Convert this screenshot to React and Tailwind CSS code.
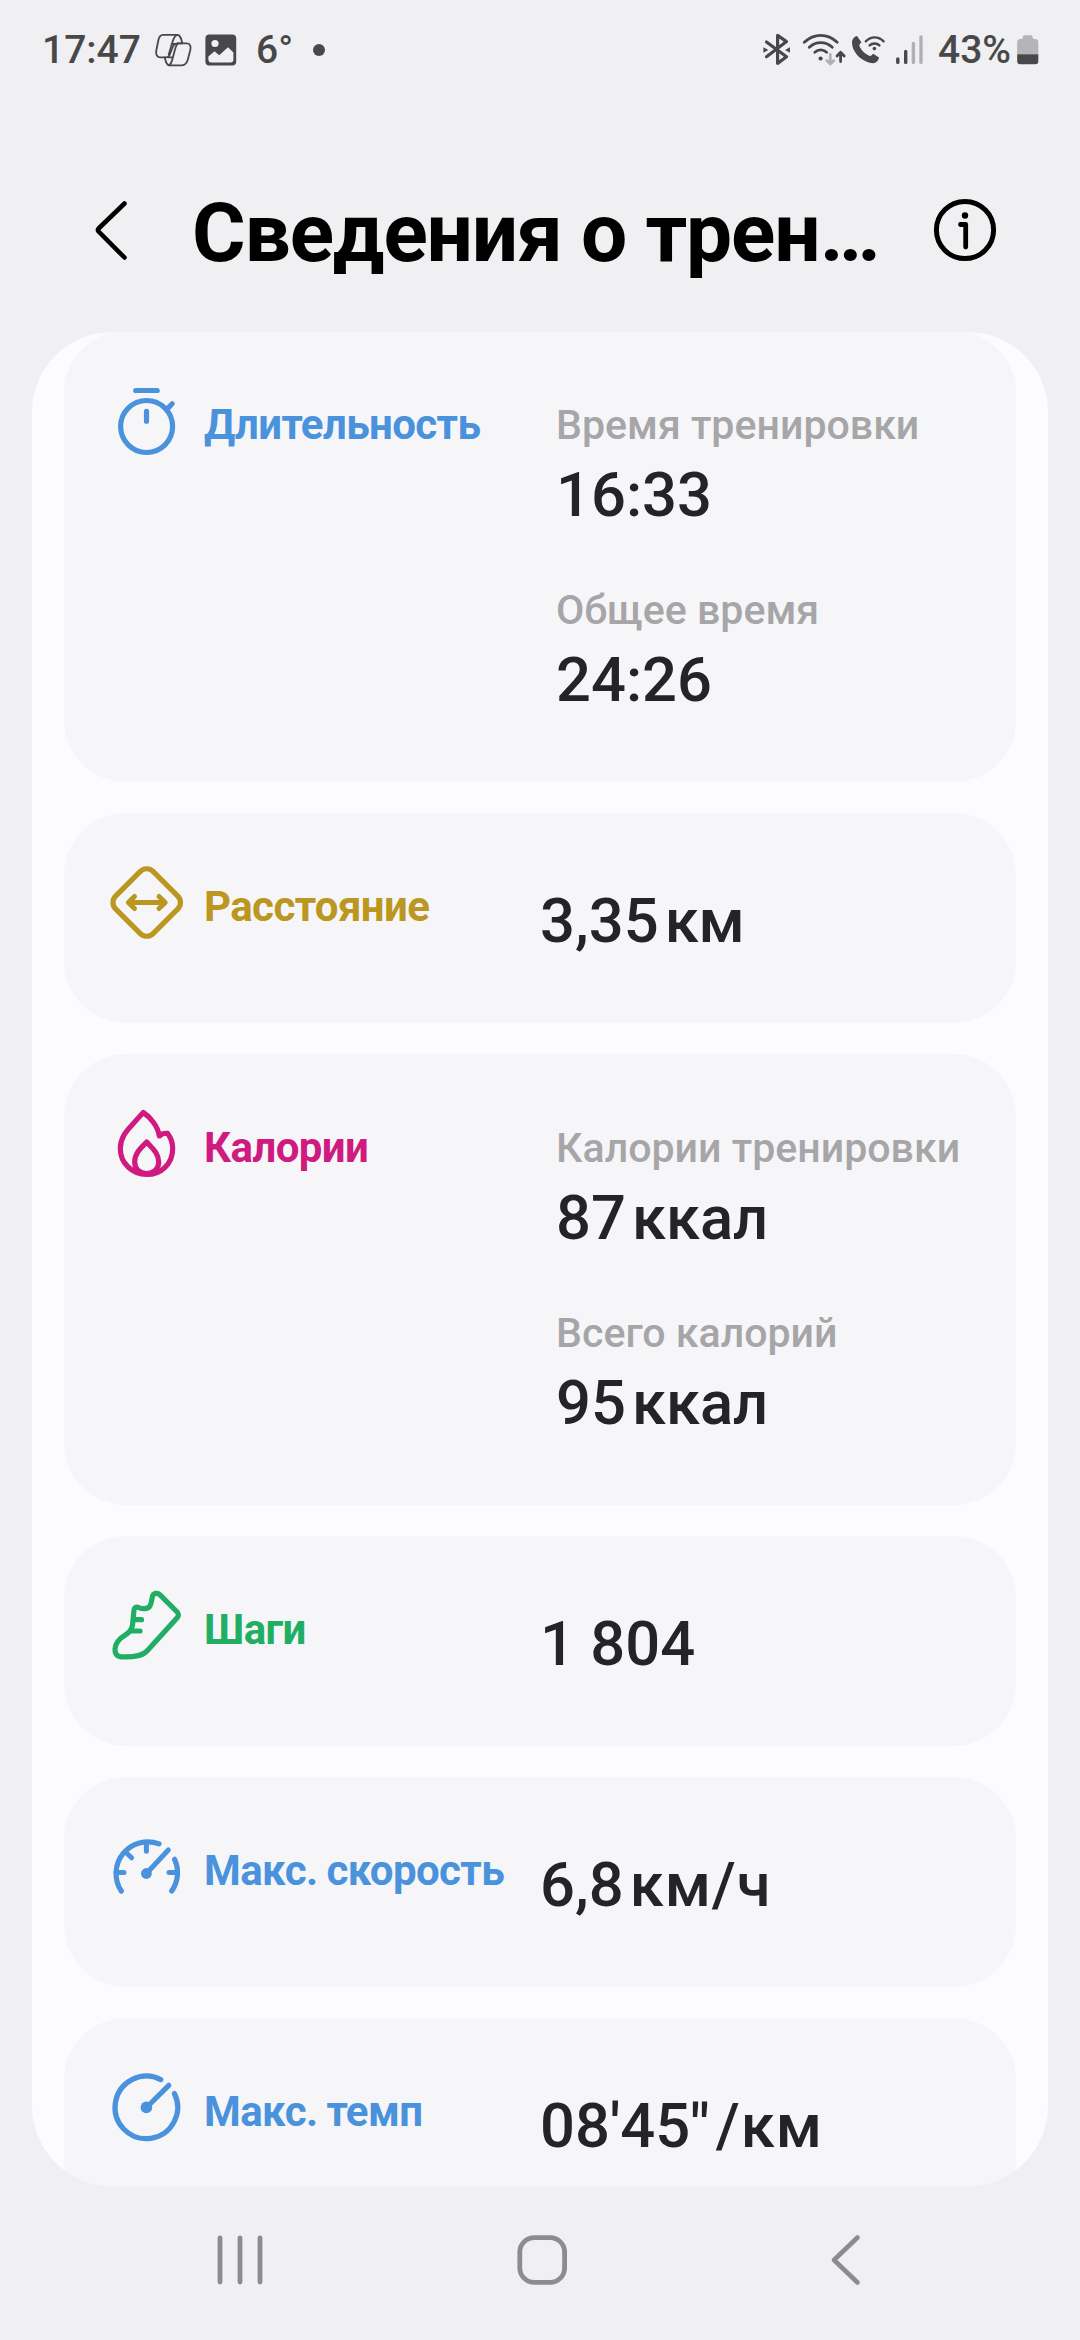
const stroke = {
  fill: 'none',
  stroke: 'currentColor',
  strokeLinecap: 'round',
  strokeLinejoin: 'round',
};

function CopilotIcon() {
  return (
    <svg className="h-9 w-10" viewBox="153 32 40 36" {...stroke} strokeWidth="1.8">
      <path d="M163 34.8H177.5C180.5 35 181.3 39 182.3 43.3H177.8C174 43.3 173 45.5 172 49L170 54C169.3 56.4 168.5 57.3 166.5 57.3H160C156.5 57.3 155.7 54 156.3 50.5L158.3 40.5C159 37 160.3 34.8 163 34.8Z" />
      <path d="M177.8 43.3H187C190.3 43.3 191 46.5 190.4 49.5L188 59C187 63 185.5 65.3 182 65.3H169.5C166.5 65.3 165.8 62 164.7 57.3" />
      <path d="M177.5 34.8C174.5 35.5 173.8 38 172.8 41L168.7 54.5" />
      <path d="M178 43.5C176 45 175.4 48 174.6 51L172 60.5C171.2 63.5 170.3 64.8 168.5 65.3" />
      <path d="M171.6 44H177M168.5 57.3H172.5" />
    </svg>
  );
}

function PictureIcon() {
  return (
    <svg className="h-8 w-8" viewBox="0 0 32 32">
      <rect x="0.4" y="0.4" width="30.8" height="31.2" rx="4" fill="currentColor" />
      <circle cx="10" cy="9.5" r="3.6" fill="#f0f0f2" />
      <path d="M3.4 22.5L9.5 17.2L14.2 21.3L23 13.3L28.4 18.5V25.5A3 3 0 0 1 25.4 28.5H6.4A3 3 0 0 1 3.4 25.5Z" fill="#f0f0f2" />
    </svg>
  );
}

function SystemIcons() {
  return (
    <svg className="h-10 w-[168px]" viewBox="760 30 168 40" {...stroke}>
      <g strokeWidth="3.2">
        <path d="M766.5 42L786.5 56.8L777.6 63.4V35.4L786.5 41.6L766.5 56.8" />
      </g>
      <g fill="currentColor" stroke="none">
        <path d="M763.4 47.2L768.4 50L763.4 52.8Z" />
        <path d="M790 47.2L785 50L790 52.8Z" />
        <circle cx="820.6" cy="58.5" r="2.1" />
        <circle cx="874.4" cy="48.6" r="1.8" />
        <path d="M857 36L861.5 42.6C860 43.6 859 45 859.6 46.6C861.5 51 865.5 54.4 869.6 55.9C871 56.2 872 54.7 873.2 53.8L879 57.6C878.6 60.3 876.6 62.8 873.6 63.2C863 63 852 53 852 42.3C852 39.3 854.3 36.7 857 36Z" />
      </g>
      <path d="M804.3 42.2C814 33 827.5 33 837.2 42.2M809.3 47.2C816 41 825.5 41 832.3 47.2M814.8 52.2C818.2 49.2 823.2 49.2 826.6 52.2" strokeWidth="2.8" />
      <path d="M830.3 54.5V63.5M826.8 60.5L830.3 64L833.8 60.5" stroke="#b1b1b3" strokeWidth="2.8" />
      <path d="M840.6 61.5V52.8M837 56L840.6 52.3L844.2 56" strokeWidth="2.8" />
      <path d="M865.8 41.3C871 36 878.5 36 883.6 41.3M869.6 45.4C872.3 42.9 877 42.9 879.4 45.4" strokeWidth="2.4" />
      <path d="M897.8 59V62.4M905.7 51.5V62.4" strokeWidth="3.4" />
      <path d="M913.4 43.5V62.4M921 37V62.4" stroke="#b1b1b3" strokeWidth="3.4" />
    </svg>
  );
}

function BatteryIcon() {
  return (
    <svg className="h-[30px] w-[22px]" viewBox="0 0 22 30">
      <path d="M6.5 0.3H15L16.2 4H18A3.2 3.2 0 0 1 21.3 7V19.3H0.2V7A3.2 3.2 0 0 1 3.5 4H5.2Z" fill="#b5b5b7" />
      <path d="M0.2 19.3H21.3V26A3.2 3.2 0 0 1 18 29.3H3.5A3.2 3.2 0 0 1 0.2 26Z" fill="currentColor" />
    </svg>
  );
}

function MetricIcon({ children }) {
  return (
    <svg className="mt-12 size-[84px] shrink-0" viewBox="0 0 84 84" {...stroke} strokeWidth="5.2">
      {children}
    </svg>
  );
}

const stopwatch = (
  <MetricIcon>
    <circle cx="41.6" cy="47.5" r="26" />
    <path d="M30.7 11.5H52.2M41.5 32.4V42.2M62.5 29.6L67.2 24.8" />
  </MetricIcon>
);

const distance = (
  <MetricIcon>
    <rect x="15.2" y="15" width="53" height="53" rx="9" transform="rotate(45 41.7 41.5)" />
    <path d="M23.5 41.5H60M29.5 35.5L23.3 41.5L29.5 47.5M54 35.5L60.2 41.5L54 47.5" strokeWidth="5" />
  </MetricIcon>
);

const flame = (
  <MetricIcon>
    <path d="M38.3 10.5C45 15 53 24 54.3 34C56.5 32 59 31 62.5 31.3C66 36 67.7 41 67.7 46.5C67.7 62 56 72.5 41.7 72.5C27 72.5 15.3 61 15.3 46.5C15.3 36 21 29.5 27 23C31 18.5 35 14 38.3 10.5Z" />
    <path d="M41.7 40C36 46 29.7 51 29.7 60C29.7 67 35 71.5 41.7 71.5C48.4 71.5 53.7 67 53.7 60C53.7 51 47 46 41.7 40Z" />
  </MetricIcon>
);

const shoe = (
  <MetricIcon>
    <path d="M47.5 12.5C48.3 9 52.5 8.3 55 10.8L72.2 28C73.8 29.6 73.8 32 72.2 33.8L42 67C37 72.3 29 73.3 16 72.8C11.5 72.6 9.8 69 10 65C10.3 58 16 53.5 21 50.5C25 48 26.5 46 27.5 41L29 26C29.3 23.5 31 22.7 33 23.3C36 24.5 40 25.8 43.5 23.5C46.5 21.5 46.2 17 47.5 12.5Z" />
    <path d="M28.5 35.7H36.5M27 47H35" />
  </MetricIcon>
);

const speedometer = (
  <MetricIcon>
    <path d="M16.3 66A31.7 31.7 0 0 1 54 18.9M69.6 34.3A31.7 31.7 0 0 1 66.7 66" />
    <path d="M41.4 17.5V26.3M20.8 27.3L26.6 32.8M11 47.5H19M64 47.5H72M41.4 48.5L63.3 25" strokeWidth="5" />
    <circle cx="41.4" cy="48.5" r="5.4" fill="currentColor" stroke="none" />
  </MetricIcon>
);

const pace = (
  <MetricIcon>
    <path d="M55.8 13.6A31.3 31.3 0 1 0 69.4 27.5M42 41L63.8 19.3" />
    <circle cx="41.4" cy="41.4" r="5.8" fill="currentColor" stroke="none" />
  </MetricIcon>
);

const metrics = [
  {
    label: 'Длительность',
    icon: stopwatch,
    color: 'text-[#4a92db]',
    rows: [
      { name: 'Время тренировки', value: '16:33' },
      { name: 'Общее время', value: '24:26' },
    ],
  },
  { label: 'Расстояние', icon: distance, color: 'text-[#bb9721]', value: '3,35', unit: 'км' },
  {
    label: 'Калории',
    icon: flame,
    color: 'text-[#cf1a7f]',
    rows: [
      { name: 'Калории тренировки', value: '87', unit: 'ккал' },
      { name: 'Всего калорий', value: '95', unit: 'ккал' },
    ],
  },
  { label: 'Шаги', icon: shoe, color: 'text-[#20ae65]', value: '1 804' },
  { label: 'Макс. скорость', icon: speedometer, color: 'text-[#4a92db]', value: '6,8', unit: 'км/ч' },
  { label: 'Макс. темп', icon: pace, color: 'text-[#4a92db]', value: '08\'45"', unit: '/км' },
];

function Value({ value, unit }) {
  return (
    <div className="flex gap-[6px] text-[61.5px] leading-[72px] font-medium whitespace-nowrap text-[#242426]">
      <span>{value}</span>
      {unit && (
        <span className={unit.includes('/') ? 'tracking-[1px] [font-kerning:none]' : ''}>{unit}</span>
      )}
    </div>
  );
}

function MetricCard({ label, icon, color, rows, value, unit }) {
  return (
    <section className={`flex shrink-0 rounded-[62px] bg-[#f6f6f8] pl-[41px] ${rows ? 'h-[451px]' : 'h-[210px]'}`}>
      <div className={`flex shrink-0 ${color} ${rows ? 'w-[451px]' : 'w-[435px]'}`}>
        {icon}
        <h2 className="mt-[70px] ml-[15px] text-[42px] leading-[48px] font-bold tracking-[-0.6px] whitespace-nowrap [word-spacing:-1px]">{label}</h2>
      </div>
      {rows ? (
        <div className="flex flex-col gap-[55px] pt-[70px]">
          {rows.map((row) => (
            <div key={row.name} className="flex flex-col gap-[10px]">
              <div className="text-[41.1px] leading-[48px] font-medium whitespace-nowrap text-[#a6a6a8]">{row.name}</div>
              <Value value={row.value} unit={row.unit} />
            </div>
          ))}
        </div>
      ) : (
        <div className="pt-[72px]">
          <Value value={value} unit={unit} />
        </div>
      )}
    </section>
  );
}

export default function App() {
  return (
    <div className="flex h-[2340px] w-[1080px] flex-col overflow-hidden bg-[#f0f0f2] font-['Roboto',sans-serif]">
      <div className="flex h-[100px] shrink-0 items-center justify-between pr-[41px] pl-[42px] text-[39px] leading-[46px] font-medium text-[#48484a]">
        <div className="flex items-center">
          <span className="w-[111px]">17:47</span>
          <CopilotIcon />
          <span className="ml-[12px]"><PictureIcon /></span>
          <span className="ml-[19px]">6°</span>
          <span className="ml-[20px] size-[12px] rounded-full bg-[#48484a]" />
        </div>
        <div className="flex items-center">
          <SystemIcons />
          <span className="w-[79px] pl-[10px]">43%</span>
          <span className="ml-[10px]"><BatteryIcon /></span>
        </div>
      </div>

      <header className="flex h-[232px] shrink-0 items-start pt-[85px] pl-[80px] text-black">
        <svg className="mt-[13px] h-16 w-16" viewBox="0 0 64 64" {...stroke} strokeWidth="4.6">
          <path d="M44.5 5.5L18.6 30.5Q17.3 32 18.6 33.5L44.5 59.5" />
        </svg>
        <h1 className="ml-[48px] w-[738px] text-[82px] leading-[96px] font-bold tracking-[-1.15px] whitespace-nowrap">Сведения о трен…</h1>
        <svg className="mt-[13px] h-16 w-[70px]" viewBox="0 0 70 64" {...stroke} strokeWidth="5">
          <circle cx="35" cy="32" r="28.6" />
          <path d="M30.5 26.5H35.7V49" strokeWidth="4.8" />
          <circle cx="35" cy="17.5" r="3.2" fill="currentColor" stroke="none" />
        </svg>
      </header>

      <main className="mx-8 flex h-[1854px] shrink-0 flex-col overflow-hidden rounded-[80px] bg-[#fcfcfe] px-8">
        <div className="-mt-px flex flex-col gap-[31px]">
          {metrics.map((metric) => (
            <MetricCard key={metric.label} {...metric} />
          ))}
        </div>
      </main>

      <nav className="flex h-[154px] shrink-0 items-center pb-[6px] pl-[215px] text-[#8c8c8e]">
        <svg className="h-14 w-[50px]" viewBox="0 0 50 56" {...stroke} strokeWidth="4.8">
          <path d="M5 6V50M25 6V50M45 6V50" />
        </svg>
        <svg className="ml-[249px] h-14 w-14" viewBox="0 0 56 56" {...stroke} strokeWidth="4.8">
          <rect x="5.8" y="5.6" width="44.8" height="44.8" rx="14.5" />
        </svg>
        <svg className="ml-[256px] h-14 w-10" viewBox="0 0 40 56" {...stroke} strokeWidth="4.6">
          <path d="M31.5 5.5L8 28L31.5 50.5" />
        </svg>
      </nav>
    </div>
  );
}
